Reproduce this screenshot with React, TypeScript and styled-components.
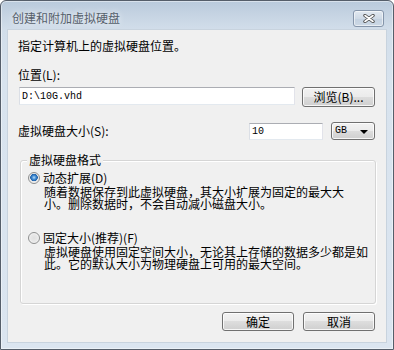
import React from 'react';
import styled, { createGlobalStyle } from 'styled-components';

const GlobalStyle = createGlobalStyle`
  html, body { margin: 0; padding: 0; background: #ffffff; }
  body { font-family: "Noto Sans CJK SC", "Liberation Sans", sans-serif; font-size: 12px; color: #000; }
  * { box-sizing: border-box; }
`;

const Window = styled.div`
  width: 394px;
  height: 350px;
  border: 1px solid #555e6a;
  border-radius: 6px 6px 0 0;
  background: linear-gradient(#b9cadc 0px, #c6d4e3 14px, #d2deea 29px, #d8e3ee 80px, #dbe5f0 100%);
  box-shadow: inset 0 0 0 1px rgba(255, 255, 255, 0.45);
  display: flex;
  flex-direction: column;
  padding: 0 7px 7px 7px;
`;

const TitleBar = styled.div`
  height: 29px;
  flex: none;
  display: flex;
  align-items: center;
  justify-content: space-between;
  padding: 5px 2px 0 4px;
`;

const TitleText = styled.span`
  font-size: 12px;
  line-height: 14px;
  color: #56606b;
  text-shadow: 0 0 6px rgba(255, 255, 255, 0.9);
`;

const CloseButton = styled.div`
  width: 31px;
  height: 17px;
  border: 1px solid #8595aa;
  border-radius: 3px;
  background: linear-gradient(#e2e9f1, #cfdae6 50%, #c3d1e0 51%, #ccd8e5);
  box-shadow: inset 0 0 0 1px rgba(255, 255, 255, 0.55);
  display: flex;
  align-items: center;
  justify-content: center;
`;

const Client = styled.div`
  flex: 1;
  background: #f0f0f0;
  display: flex;
  flex-direction: column;
  padding: 10px 11px 0 10px;
  box-shadow: 0 0 0 1px #c8d3de;
`;

const Text = styled.div<{ $mt?: number }>`
  font-size: 12px;
  line-height: 12px;
  white-space: nowrap;
  margin-top: ${(p) => p.$mt ?? 0}px;
`;

const Row = styled.div<{ $mt: number }>`
  display: flex;
  align-items: center;
  margin-top: ${(p) => p.$mt}px;
`;

const TextBox = styled.div<{ $w: number; $h: number; $ml?: number }>`
  width: ${(p) => p.$w}px;
  height: ${(p) => p.$h}px;
  margin-left: ${(p) => p.$ml ?? 0}px;
  background: #ffffff;
  border: 1px solid;
  border-color: #abadb3 #e2e3ea #e3e9ef #dbdfe6;
  display: flex;
  align-items: center;
  padding-left: 2px;
  font-family: "Liberation Mono", "Noto Sans CJK SC", monospace;
  font-size: 10px;
  flex: none;
`;

const PushButton = styled.div<{ $w: number; $h: number; $ml?: number }>`
  width: ${(p) => p.$w}px;
  height: ${(p) => p.$h}px;
  margin-left: ${(p) => p.$ml ?? 0}px;
  flex: none;
  border: 1px solid #707070;
  border-radius: 3px;
  background: linear-gradient(#f2f2f2 0%, #ebebeb 49%, #dddddd 50%, #cfcfcf 100%);
  box-shadow: inset 0 0 0 1px rgba(255, 255, 255, 0.8);
  display: flex;
  align-items: center;
  justify-content: center;
  font-size: 12px;
  line-height: 12px;
  white-space: nowrap;
`;

const Combo = styled(PushButton)`
  justify-content: space-between;
  padding: 0 6px 0 3px;
  font-family: "Liberation Mono", "Noto Sans CJK SC", monospace;
  font-size: 10px;
`;

const Arrow = styled.span`
  width: 0;
  height: 0;
  border-left: 4px solid transparent;
  border-right: 4px solid transparent;
  border-top: 4px solid #000;
  margin-top: 1px;
`;

const Spacer = styled.div`
  flex: 1;
`;

const GroupBox = styled.div`
  position: relative;
  margin: 20px 0 0 2px;
  width: 356px;
  height: 144px;
  border: 1px solid #d5d5d5;
  border-radius: 3px;
  box-shadow: 1px 1px 0 #ffffff, inset 1px 1px 0 #ffffff;
  display: flex;
  flex-direction: column;
  padding: 10px 0 0 7px;
`;

const Legend = styled.span`
  position: absolute;
  top: -7px;
  left: 6px;
  padding: 0 2px;
  background: #f0f0f0;
  font-size: 12px;
  line-height: 12px;
`;

const RadioRow = styled.div<{ $mt: number }>`
  display: flex;
  align-items: center;
  height: 13px;
  margin-top: ${(p) => p.$mt}px;
`;

const RadioDot = styled.span<{ $checked?: boolean }>`
  width: 12px;
  height: 12px;
  flex: none;
  border-radius: 50%;
  border: 1px solid #8e8f8f;
  background: ${(p) =>
    p.$checked
      ? 'radial-gradient(circle at 50% 45%, #b8dcf6 0px, #3f8ad2 2px, #1d5fa8 3.5px, #e6e6e6 4px, #f4f4f4 5.5px)'
      : 'radial-gradient(circle at 50% 50%, #e0e0e0 0px, #e8e8e8 3.5px, #f7f7f7 5.5px)'};
  margin-right: 3px;
`;

const Desc = styled.div`
  margin: 2px 0 0 16px;
  font-size: 12px;
  line-height: 12px;
  white-space: nowrap;
`;

const DescLine = styled.div``;

const ButtonRow = styled.div`
  display: flex;
  justify-content: flex-end;
  margin-top: 8px;
`;

export default function App() {
  return (
    <>
      <GlobalStyle />
      <Window>
        <TitleBar>
          <TitleText>创建和附加虚拟硬盘</TitleText>
          <CloseButton>
            <svg width="12" height="9" viewBox="0 0 12 9">
              <path d="M2 1.5 L10 7.5 M10 1.5 L2 7.5" stroke="#4c4c4c" strokeWidth="3.4" strokeLinecap="round" fill="none" />
              <path d="M2 1.5 L10 7.5 M10 1.5 L2 7.5" stroke="#ffffff" strokeWidth="1.6" strokeLinecap="round" fill="none" />
            </svg>
          </CloseButton>
        </TitleBar>
        <Client>
          <Text>指定计算机上的虚拟硬盘位置。</Text>
          <Text $mt={17}>位置(L):</Text>
          <Row $mt={6} style={{ alignItems: 'flex-start' }}>
            <TextBox $w={276} $h={18} $ml={1}>D:\10G.vhd</TextBox>
            <PushButton $w={73} $h={20} $ml={7}>浏览(B)...</PushButton>
          </Row>
          <Row $mt={15}>
            <Text>虚拟硬盘大小(S):</Text>
            <Spacer />
            <TextBox $w={74} $h={17}>10</TextBox>
            <Combo $w={44} $h={18} $ml={8}>
              GB
              <Arrow />
            </Combo>
          </Row>
          <GroupBox>
            <Legend>虚拟硬盘格式</Legend>
            <RadioRow $mt={0}>
              <RadioDot $checked />
              动态扩展(D)
            </RadioRow>
            <Desc>
              <DescLine>随着数据保存到此虚拟硬盘，其大小扩展为固定的最大大</DescLine>
              <DescLine>小。删除数据时，不会自动减小磁盘大小。</DescLine>
            </Desc>
            <RadioRow $mt={21}>
              <RadioDot />
              固定大小(推荐)(F)
            </RadioRow>
            <Desc>
              <DescLine>虚拟硬盘使用固定空间大小，无论其上存储的数据多少都是如</DescLine>
              <DescLine>此。它的默认大小为物理硬盘上可用的最大空间。</DescLine>
            </Desc>
          </GroupBox>
          <ButtonRow>
            <PushButton $w={72} $h={19}>确定</PushButton>
            <PushButton $w={72} $h={19} $ml={9}>取消</PushButton>
          </ButtonRow>
        </Client>
      </Window>
    </>
  );
}
